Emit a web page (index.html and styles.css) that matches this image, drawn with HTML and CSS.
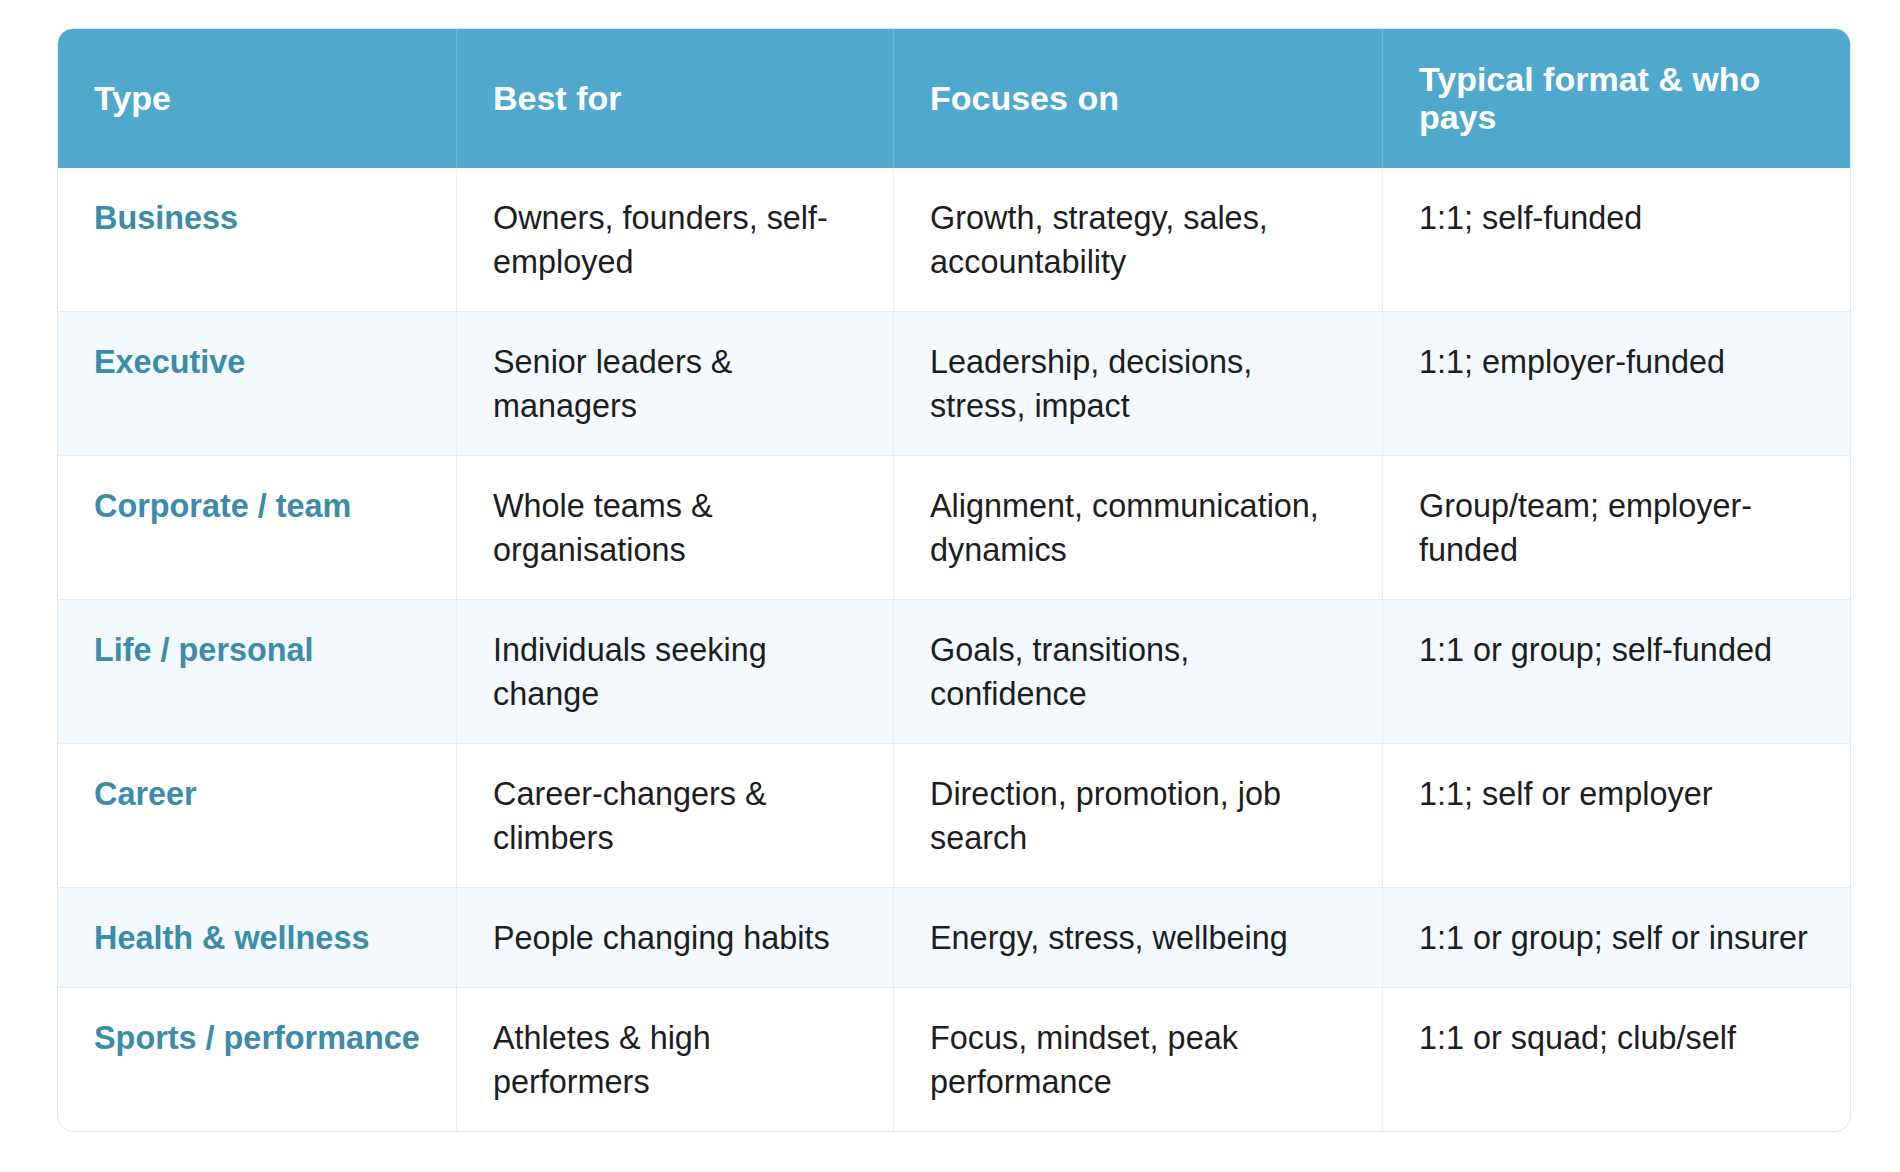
FILE: index.html
```html
<!DOCTYPE html>
<html lang="en">
<head>
<meta charset="utf-8">
<title>Coaching types</title>
<link rel="stylesheet" href="styles.css">
</head>
<body>
<div class="card">
  <table class="types">
    <colgroup>
      <col class="c1"><col class="c2"><col class="c3"><col class="c4">
    </colgroup>
    <thead>
      <tr>
        <th>Type</th>
        <th>Best for</th>
        <th>Focuses on</th>
        <th>Typical format &amp; who pays</th>
      </tr>
    </thead>
    <tbody>
      <tr>
        <td class="name">Business</td>
        <td>Owners, founders, self-employed</td>
        <td>Growth, strategy, sales, accountability</td>
        <td>1:1; self-funded</td>
      </tr>
      <tr>
        <td class="name">Executive</td>
        <td>Senior leaders &amp; managers</td>
        <td>Leadership, decisions, stress, impact</td>
        <td>1:1; employer-funded</td>
      </tr>
      <tr>
        <td class="name">Corporate / team</td>
        <td>Whole teams &amp; organisations</td>
        <td>Alignment, communication, dynamics</td>
        <td>Group/team; employer-funded</td>
      </tr>
      <tr>
        <td class="name">Life / personal</td>
        <td>Individuals seeking change</td>
        <td>Goals, transitions, confidence</td>
        <td>1:1 or group; self-funded</td>
      </tr>
      <tr>
        <td class="name">Career</td>
        <td>Career-changers &amp; climbers</td>
        <td>Direction, promotion, job search</td>
        <td>1:1; self or employer</td>
      </tr>
      <tr>
        <td class="name">Health &amp; wellness</td>
        <td>People changing habits</td>
        <td>Energy, stress, wellbeing</td>
        <td>1:1 or group; self or insurer</td>
      </tr>
      <tr>
        <td class="name">Sports / performance</td>
        <td>Athletes &amp; high performers</td>
        <td>Focus, mindset, peak performance</td>
        <td>1:1 or squad; club/self</td>
      </tr>
    </tbody>
  </table>
</div>
</body>
</html>
```

FILE: styles.css
```css
html, body {
  margin: 0;
  padding: 0;
  background: #ffffff;
}

body {
  font-family: "Liberation Sans", Arial, sans-serif;
  color: #1d1d1f;
}

.card {
  margin: 28px 0 0 57px;
  width: 1794px;
  box-sizing: border-box;
  border: 1px solid #dfe9ee;
  border-radius: 16px;
  overflow: hidden;
  background: #ffffff;
}

.types {
  width: 100%;
  table-layout: fixed;
  border-collapse: separate;
  border-spacing: 0;
}

.c1 { width: 399px; }
.c2 { width: 437px; }
.c3 { width: 489px; }
.c4 { width: 467px; }

.types th {
  background: #50a9cc;
  color: #ffffff;
  font-weight: bold;
  font-size: 34px;
  line-height: 38px;
  text-align: left;
  vertical-align: middle;
  padding: 31px 36px 32px 36px;
  border-right: 1px solid rgba(255, 255, 255, 0.18);
}

.types th:last-child,
.types td:last-child {
  border-right: none;
}

.types td {
  font-size: 32.4px;
  line-height: 44px;
  vertical-align: top;
  text-align: left;
  padding: 28px 36px 27px 36px;
  border-right: 1px solid #e6eef2;
  border-bottom: 1px solid #e6eef2;
}

.types tbody tr:last-child td {
  border-bottom: none;
}

.types tbody tr:nth-child(even) td {
  background: #f3f9fc;
}

.types td.name {
  color: #3a8ca8;
  font-weight: bold;
  white-space: nowrap;
}
```
